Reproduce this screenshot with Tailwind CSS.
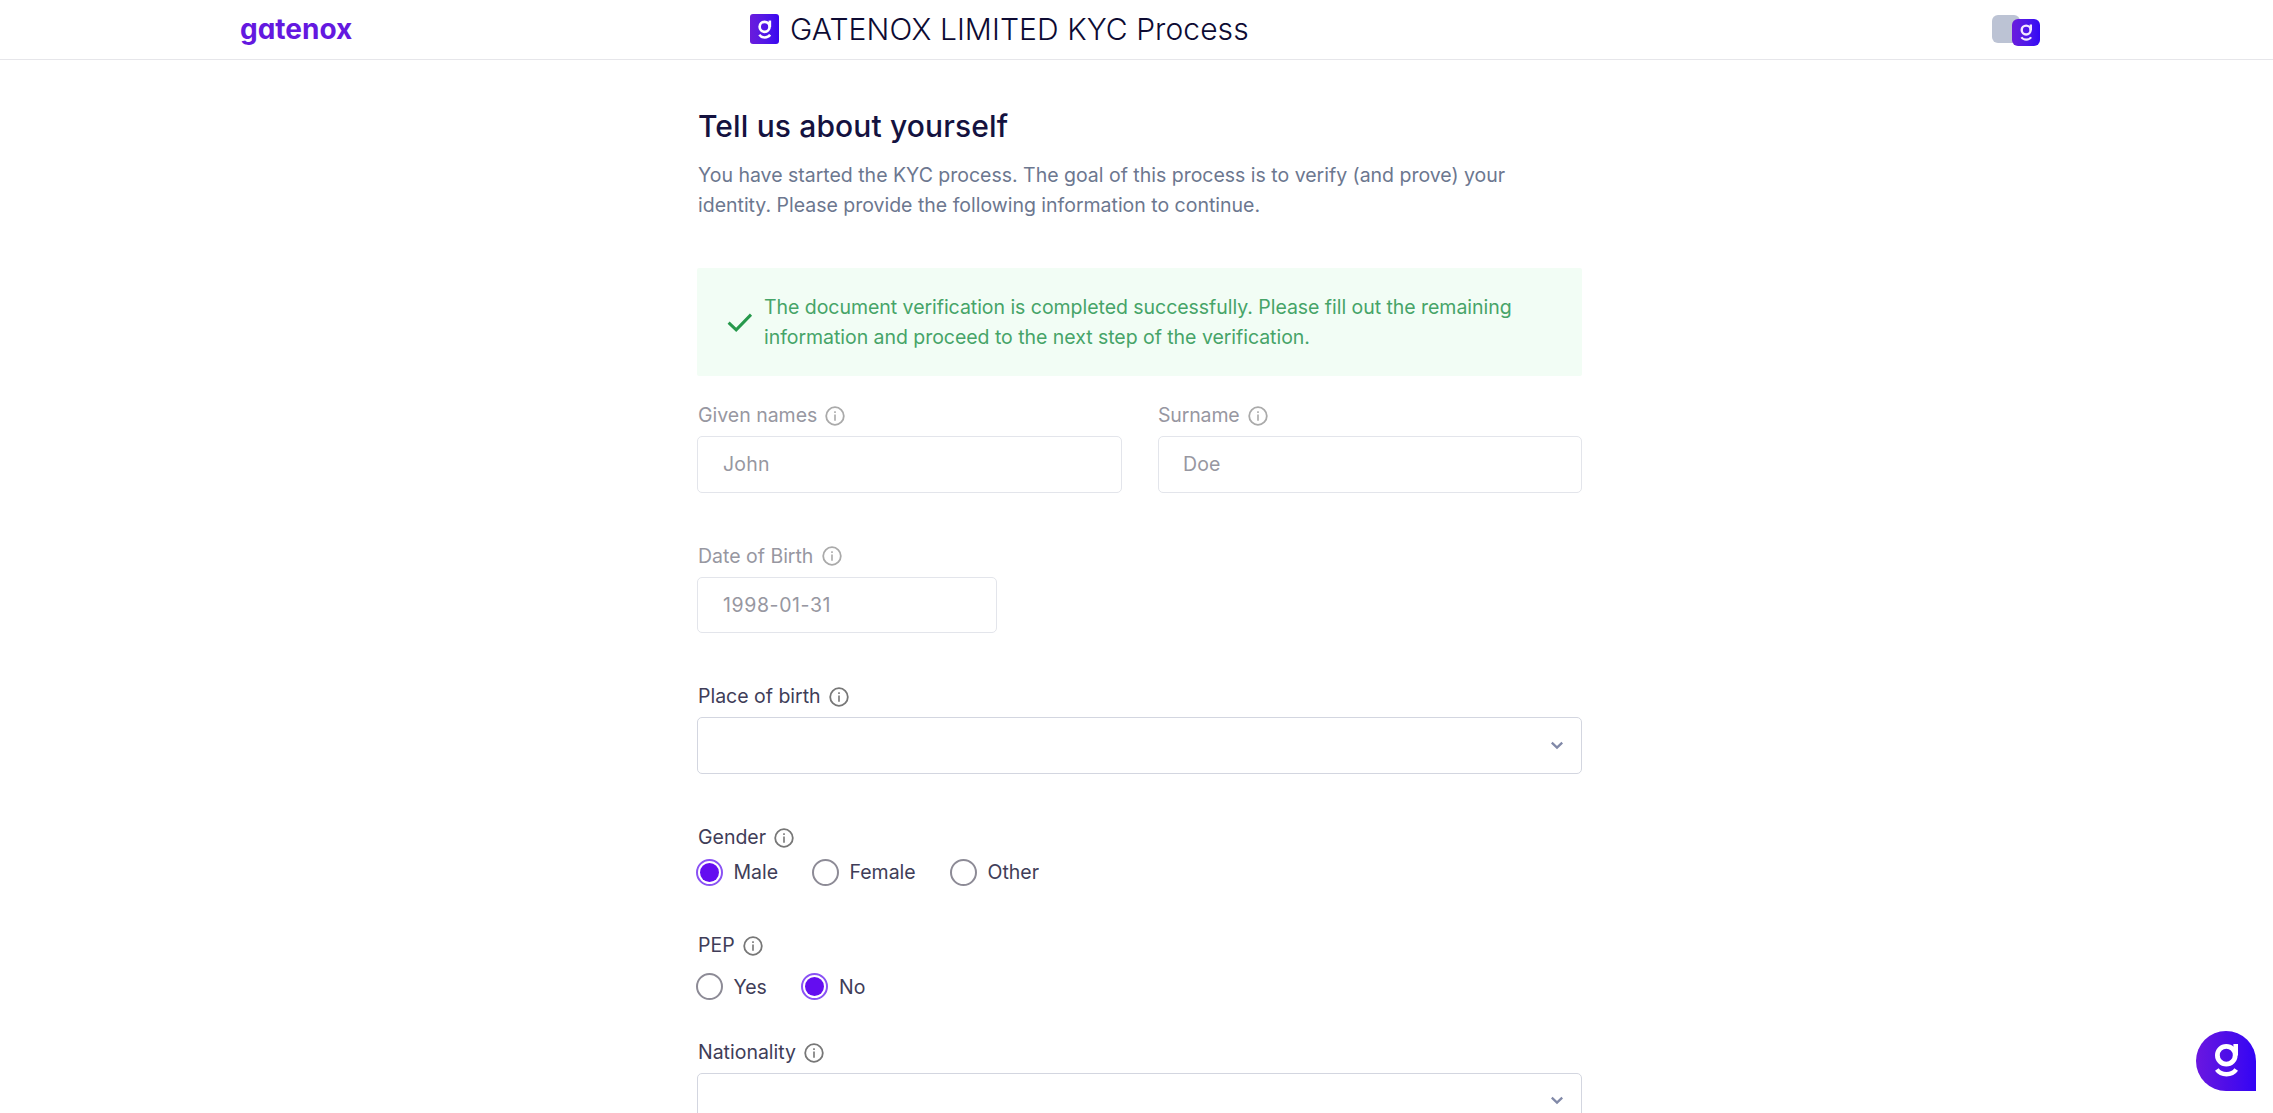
<!DOCTYPE html>
<html lang="en">
<head>
<meta charset="utf-8">
<title>GATENOX LIMITED KYC Process</title>
<script src="https://cdn.jsdelivr.net/npm/@tailwindcss/browser@4"></script>
</head>
<body class="h-[1113px] overflow-hidden bg-white font-['Inter',sans-serif] text-[19.5px] leading-[30px] font-normal tracking-[-0.01px] text-[#403d58]">
<svg class="hidden">
  <defs>
    <symbol id="mark" viewBox="0 0 24 34">
      <circle cx="11.3" cy="12.2" r="8.9" fill="none" stroke="currentColor" stroke-width="4.8"/>
      <path d="M18.4 1H23v11.5h-4.6z" fill="currentColor"/>
      <path d="M1.8 26.5Q5 31.2 11.5 31.2T21.2 26.5" fill="none" stroke="currentColor" stroke-width="4.4"/>
    </symbol>
    <symbol id="info" viewBox="0 0 20 20">
      <circle cx="10" cy="10" r="8.8" fill="none" stroke="currentColor" stroke-width="1.8"/>
      <path d="M10 8.6v6.2M10 5.2v1.8" fill="none" stroke="currentColor" stroke-width="1.6"/>
    </symbol>
    <symbol id="chevron" viewBox="0 0 14 9">
      <path d="M1.8 1.7 7 6.7l5.2-5" fill="none" stroke="currentColor" stroke-width="2.3"/>
    </symbol>
  </defs>
</svg>

<header class="flex h-[60px] items-start justify-between border-b border-[#e6e6ea] pr-[233px] pl-[240px]">
  <div class="mt-[9px] w-[510px] text-[28px] leading-[40px] font-bold tracking-normal text-[#6418e0] [font-feature-settings:'cv11']">gatenox</div>
  <div class="flex flex-1 items-start">
    <div class="mt-[14px] flex h-[30px] w-[29px] items-center justify-center rounded-[3px] bg-linear-to-r from-[#6a1bdc] to-[#3a05f0] text-white">
      <svg class="h-[19px] w-[14px]"><use href="#mark"/></svg>
    </div>
    <h1 class="mt-[9px] ml-[11px] text-[30px] leading-[40px] font-light tracking-[0.08px] text-[#0d0b33]">GATENOX LIMITED KYC Process</h1>
  </div>
  <div class="mt-[15px] flex items-start">
    <div class="h-[28px] w-[28px] rounded-[6px] bg-[#bcc3d4]"></div>
    <div class="mt-[4px] -ml-[8px] flex h-[27px] w-[28px] items-center justify-center rounded-[6px] bg-linear-to-r from-[#6a1bdc] to-[#3205f5] text-[#f3e8ff]">
      <svg class="h-[17px] w-[13px]"><use href="#mark"/></svg>
    </div>
  </div>
</header>

<main class="ml-[697px] w-[885px] pt-[48px]">
  <h2 class="pl-[1px] text-[30px] leading-[36px] font-medium tracking-[0.13px] text-[#14123f]">Tell us about yourself</h2>
  <p class="mt-[16px] pl-[1px] text-[#6c778f]">You have started the KYC process. The goal of this process is to verify (and prove) your<br>identity. Please provide the following information to continue.</p>

  <div class="mt-[48px] flex h-[107.5px] items-center rounded-[2px] bg-[#f2fdf5] pl-[30px] text-[#46a468]">
    <svg class="h-[20px] w-[26px]" viewBox="0 0 26 20"><path d="M1.6 10.6 9.2 17.8 24 2.6" fill="none" stroke="#27994c" stroke-width="3"/></svg>
    <p class="ml-[11px] tracking-[-0.04px]">The document verification is completed successfully. Please fill out the remaining<br>information and proceed to the next step of the verification.</p>
  </div>

  <form>
    <div class="mt-[24.5px] grid grid-cols-[425px_424px] justify-between text-[#9797a1]">
      <div>
        <label class="flex items-center gap-[8px] pl-[1px]">Given names <svg class="mt-[1px] h-[20px] w-[20px] text-[#aaaaaa]"><use href="#info"/></svg></label>
        <div class="mt-[6px] flex h-[56.5px] items-center rounded-[5px] border border-[#e3e5eb] pl-[25px] tracking-[0.2px]">John</div>
      </div>
      <div>
        <label class="flex items-center gap-[8px] tracking-[-0.15px]">Surname <svg class="mt-[1px] h-[20px] w-[20px] text-[#aaaaaa]"><use href="#info"/></svg></label>
        <div class="mt-[6px] flex h-[56.5px] items-center rounded-[5px] border border-[#e3e5eb] pl-[24px] tracking-[0.1px]">Doe</div>
      </div>
    </div>

    <div class="mt-[48px] text-[#9797a1]">
      <label class="flex items-center gap-[9px] pl-[1px]">Date of Birth <svg class="mt-[1px] h-[20px] w-[20px] text-[#aaaaaa]"><use href="#info"/></svg></label>
      <div class="mt-[6px] flex h-[56.5px] w-[300px] items-center rounded-[5px] border border-[#e3e5eb] pl-[25px] tracking-[0.6px]">1998-01-31</div>
    </div>

    <div class="mt-[48px]">
      <label class="flex items-center gap-[8px] pl-[1px]">Place of birth <svg class="mt-[1px] h-[20px] w-[20px] text-[#777777]"><use href="#info"/></svg></label>
      <div class="mt-[6px] flex h-[56.5px] items-center justify-end rounded-[5px] border border-[#d3d6e0] pr-[17px] text-[#8189a8]"><svg class="h-[9px] w-[14px]"><use href="#chevron"/></svg></div>
    </div>

    <div class="mt-[48px]">
      <label class="flex items-center gap-[8px] pl-[1px]">Gender <svg class="mt-[2px] h-[20px] w-[20px] text-[#777777]"><use href="#info"/></svg></label>
      <div class="mt-[6.5px] -ml-[1.5px] flex h-[28px] items-center">
        <label class="flex w-[116px] items-center gap-[11px]"><span class="flex h-[27px] w-[27px] items-center justify-center rounded-full border-2 border-[#8a52f4]"><span class="h-[19px] w-[19px] rounded-full bg-[#640df0]"></span></span>Male</label>
        <label class="flex w-[138px] items-center gap-[11px]"><span class="h-[27px] w-[27px] rounded-full border-2 border-[#8d8b96]"></span>Female</label>
        <label class="flex items-center gap-[11px]"><span class="h-[27px] w-[27px] rounded-full border-2 border-[#8d8b96]"></span>Other</label>
      </div>
    </div>

    <div class="mt-[43.5px]">
      <label class="flex items-center gap-[8px] pl-[1px]">PEP <svg class="mt-[2px] h-[20px] w-[20px] text-[#777777]"><use href="#info"/></svg></label>
      <div class="mt-[13px] -ml-[1.5px] flex h-[28px] items-center">
        <label class="flex w-[105.5px] items-center gap-[11px]"><span class="h-[27px] w-[27px] rounded-full border-2 border-[#8d8b96]"></span>Yes</label>
        <label class="flex items-center gap-[11px]"><span class="flex h-[27px] w-[27px] items-center justify-center rounded-full border-2 border-[#8a52f4]"><span class="h-[19px] w-[19px] rounded-full bg-[#640df0]"></span></span>No</label>
      </div>
    </div>

    <div class="mt-[36px]">
      <label class="flex items-center gap-[8px] pl-[1px]">Nationality <svg class="mt-[2px] h-[20px] w-[20px] text-[#777777]"><use href="#info"/></svg></label>
      <div class="mt-[6px] flex h-[56.5px] items-center justify-end rounded-[5px] border border-[#d3d6e0] pr-[17px] text-[#8189a8]"><svg class="h-[9px] w-[14px]"><use href="#chevron"/></svg></div>
    </div>
  </form>
</main>

<button class="fixed top-[1031px] left-[2196px] flex h-[60px] w-[60px] items-center justify-center rounded-full rounded-br-[2px] bg-linear-to-r from-[#6a16e0] via-[#4f0de8] to-[#3203f5] pb-[2px] pl-[2px] text-white">
  <svg class="h-[34px] w-[24px]"><use href="#mark"/></svg>
</button>
</body>
</html>
